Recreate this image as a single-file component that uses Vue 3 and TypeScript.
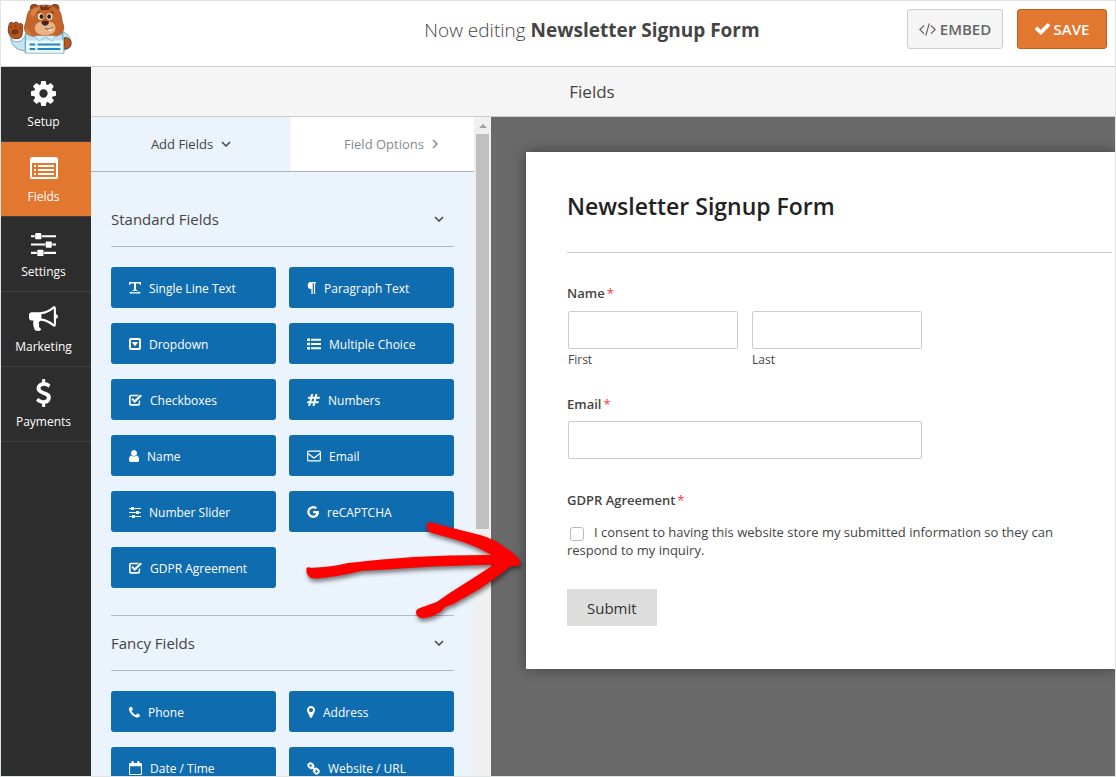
<script setup lang="ts">
import { ref } from 'vue'

interface Glyph {
  box: string
  w: number
  h: number
  d: string
}

const glyphs: Record<string, Glyph> = {
  cog: { box: '128 128 1536 1536', w: 25, h: 25, d: 'M1152 896q0-106-75-181t-181-75-181 75-75 181 75 181 181 75 181-75 75-181zm512-109v222q0 12-8 23t-20 13l-185 28q-19 54-39 91 35 50 107 138 10 12 10 25t-9 23q-27 37-99 108t-94 71q-12 0-26-9l-138-108q-44 23-91 38-16 136-29 186-7 28-36 28h-222q-14 0-24.500-8.500t-11.500-21.500l-28-184q-49-16-90-37l-141 107q-10 9-25 9-14 0-25-11-126-114-165-168-7-10-7-23 0-12 8-23 15-21 51-66.500t54-70.500q-27-50-41-99l-183-27q-13-2-21-12.500t-8-23.500v-222q0-12 8-23t19-13l186-28q14-46 39-92-40-57-107-138-10-12-10-24 0-10 9-23 26-36 98.500-107.500t94.500-71.500q13 0 26 10l138 107q44-23 91-38 16-136 29-186 7-28 36-28h222q14 0 24.500 8.500t11.500 21.500l28 184q49 16 90 37l142-107q9-9 24-9 13 0 25 10 129 119 165 170 7 8 7 22 0 12-8 23-15 21-51 66.500t-54 70.500q26 50 41 98l183 28q13 2 21 12.500t8 23.500z' },
  listAlt: { box: '0 0 28 22', w: 28, h: 22, d: 'M2.500 0h23A2.500 2.500 0 0 1 28 2.500v17a2.500 2.500 0 0 1-2.500 2.500h-23A2.500 2.500 0 0 1 0 19.500v-17A2.500 2.500 0 0 1 2.500 0zM2 6v13.500l.5.5h23l.5-.5V6zM4 8h2v2H4zM4 12h2v2H4zM4 16h2v2H4zM8 8h16v2H8zM8 12h16v2H8zM8 16h16v2H8z' },
  sliders: { box: '0 128 1536 1536', w: 25, h: 25, d: 'M352 1408v128h-352v-128h352zm352-128q26 0 45 19t19 45v256q0 26-19 45t-45 19h-256q-26 0-45-19t-19-45v-256q0-26 19-45t45-19h256zm160-384v128h-864v-128h864zm-640-512v128h-224v-128h224zm1312 1024v128h-736v-128h736zm-960-1152q26 0 45 19t19 45v256q0 26-19 45t-45 19h-256q-26 0-45-19t-19-45v-256q0-26 19-45t45-19h256zm640 512q26 0 45 19t19 45v256q0 26-19 45t-45 19h-256q-26 0-45-19t-19-45v-256q0-26 19-45t45-19h256zm320 128v128h-224v-128h224zm0-512v128h-864v-128h864z' },
  bullhorn: { box: '0 128 1792 1536', w: 29, h: 25, d: 'M1664 640q53 0 90.500 37.500t37.500 90.500-37.500 90.500-90.500 37.500v384q0 52-38 90t-90 38q-417-347-812-380-58 19-91 66t-31 100.500 40 92.500q-20 33-23 65.500t6 58 33.500 55 48 50 61.500 50.500q-29 58-111.500 83t-168.500 11.500-132-55.500q-7-23-29.500-87.500t-32-94.500-23-89-15-101 3.500-98.500 22-110.500h-122q-66 0-113-47t-47-113v-192q0-66 47-113t113-47h480q435 0 896-384 52 0 90 38t38 90v384zm-128 604v-954q-394 302-768 343v270q377 42 768 341z' },
  dollar: { box: '420 0 950 1792', w: 15, h: 28, d: 'M1362 1185q0 153-99.500 263.500t-258.500 136.500v175q0 14-9 23t-23 9h-135q-13 0-22.500-9.500t-9.500-22.500v-175q-66-9-127.500-31t-101.500-44.500-74-48-46.500-37.500-17.500-18q-17-21-2-41l103-135q7-10 23-12 15-2 24 9l2 2q113 99 243 125 37 8 74 8 81 0 142.500-43t61.500-122q0-28-15-53t-33.500-42-58.500-37.500-66-32-80-32.500q-39-16-61.500-25t-61.500-26.500-62.500-31-56.500-35.500-53.500-42.500-43.500-49-35.500-58-21-66.500-8.500-78q0-138 98-242t255-134v-180q0-13 9.500-22.500t22.500-9.500h135q14 0 23 9t9 23v176q57 6 110.500 23t87 33.500 63.500 37.500 39 29 15 14q17 18 5 38l-81 146q-8 15-23 16-14 3-27-7-3-3-14.500-12t-39-26.500-58.500-32-74.500-26-85.500-11.500q-95 0-155 43t-60 111q0 26 8.500 48t29.500 41.500 39.500 33 56 31 60.500 27 70 27.500q53 20 81 31.500t76 35 75.500 42.500 62 50 53 63.500 31.500 76.500 13 94z' },
  code: { box: '45 128 1830 1536', w: 17, h: 14, d: 'M617 1399l-50 50q-10 10-23 10t-23-10l-466-466q-10-10-10-23t10-23l466-466q10-10 23-10t23 10l50 50q10 10 10 23t-10 23l-393 393 393 393q10 10 10 23t-10 23zm591-1067l-373 1291q-4 13-15.500 19.500t-23.500 2.500l-62-17q-13-4-19.500-15.500t-2.500-24.500l373-1291q4-13 15.500-19.500t23.500-2.500l62 17q13 4 19.500 15.500t2.500 24.500zm657 651l-466 466q-10 10-23 10t-23-10l-50-50q-10-10-10-23t10-23l393-393-393-393q-10-10-10-23t10-23l50-50q10-10 23-10t23 10l466 466q10 10 10 23t-10 23z' },
  check: { box: '121 334 1550 1188', w: 15, h: 12, d: 'M1671 566q0 40-28 68l-724 724-136 136q-28 28-68 28t-68-28l-136-136-362-362q-28-28-28-68t28-68l136-136q28-28 68-28t68 28l294 295 656-657q28-28 68-28t68 28l136 136q28 28 28 68z' },
  text: { box: '0 0 12 12', w: 12, h: 12, d: 'M0 0h12v3h-1l-.5-1.500H7v6.300l1.500.4V9h-5v-.8L5 7.800V1.500H1.500L1 3H0zM2.500 9.500v.7h7v-.7L12 10.800 9.500 12v-.6h-7v.6L0 10.800z' },
  paragraph: { box: '0 0 9 12', w: 9, h: 12, d: 'M4 0h5v1.200H8.100V12H6.900V1.200H5.700V12H4.400V7A3.500 3.500 0 0 1 4 0z' },
  dropdown: { box: '0 0 12 12', w: 12, h: 12, d: 'M2 0h8a2 2 0 0 1 2 2v8a2 2 0 0 1-2 2H2a2 2 0 0 1-2-2V2a2 2 0 0 1 2-2zM2 2v8h8V2zM2.800 4h6.400L6 8.300z' },
  list: { box: '0 0 14 12', w: 14, h: 12, d: 'M0 .5h3v2.600H0zM0 4.700h3v2.600H0zM0 8.900h3v2.600H0zM4 .8h10v2H4zM4 5h10v2H4zM4 9.200h10v2H4z' },
  checkbox: { box: '0 0 13 12', w: 13, h: 12, d: 'M2 .7h8l-1.300 1.500H1.700v7.900h7.900V7.400L11.100 6v3.700a2 2 0 0 1-2 2H2a2 2 0 0 1-2-2V2.700a2 2 0 0 1 2-2zM2.300 5.200l1.400-1.300 2 2L11.400.5 13 2 5.700 9z' },
  hash: { box: '0 0 13 12', w: 13, h: 12, d: 'M4.200 0h2L5.500 2.700h2.300L8.500 0h2l-.7 2.700H13l-.5 2H9.300L8.700 7.200h3.200l-.5 2H8.200L7.500 12h-2l.7-2.800H3.900L3.200 12h-2l.7-2.800H0l.5-2h1.900L3 4.700H.8l.5-2h2.200zM5 4.700l-.6 2.500h2.300l.6-2.500z' },
  user: { box: '256 128 1280 1536', w: 10, h: 12, d: 'M1536 1399q0 109-62.500 187t-150.500 78h-854q-88 0-150.500-78t-62.500-187q0-85 8.500-160.500t31.500-152 58.500-131 94-89 134.500-34.500q131 128 313 128t313-128q76 0 134.500 34.500t94 89 58.500 131 31.500 152 8.500 160.500zm-256-887q0 159-112.500 271.500t-271.500 112.500-271.500-112.500-112.500-271.500 112.500-271.500 271.500-112.500 271.500 112.500 112.500 271.500z' },
  mail: { box: '0 0 14 12', w: 14, h: 12, d: 'M1.500.5h11A1.500 1.500 0 0 1 14 2v8a1.500 1.500 0 0 1-1.500 1.500h-11A1.500 1.500 0 0 1 0 10V2A1.500 1.500 0 0 1 1.500.5zM1.200 1.700v1.200L7 7.200l5.800-4.300V1.700zM1.200 4.400v5.900h11.600V4.400L7 8.700z' },
  google: { box: '0 0 12 12', w: 12, h: 12, d: 'M6.100 4.900h5.700c.6 4-1.700 7-5.700 7A5.900 5.900 0 1 1 10.100 1.600L8.400 3.300A3.500 3.500 0 0 0 2.500 6c0 2.100 1.700 3.600 3.600 3.600 1.600 0 2.800-.9 3.100-2.400H6.100z' },
  phone: { box: '192 256 1408 1280', w: 11, h: 11, d: 'M1600 1240q0 27-10 70.500t-21 68.500q-21 50-122 106-94 51-186 51-27 0-53-3.500t-57.500-12.500-47-14.500-55.500-20.500-49-18q-98-35-175-83-127-79-264-216t-216-264q-48-77-83-175-3-9-18-49t-20.500-55.500-14.500-47-12.500-57.500-3.500-53q0-92 51-186 56-101 106-122 25-11 68.500-21t70.500-10q14 0 21 3 18 6 53 76 11 19 30 54t35 63.500 31 53.500q3 4 17.500 25t21.500 35.500 7 28.500q0 20-28.500 50t-62 55-62 53-28.500 46q0 9 5 22.500t8.500 20.500 14 24 11.500 19q76 137 174 235t235 174q2 1 19 11.500t24 14 20.500 8.500 22.500 5q18 0 46-28.500t53-62 55-62 50-28.500q14 0 28.500 7t35.500 21.500 25 17.500q25 15 53.500 31t63.500 35 54 30q70 35 76 53 3 7 3 21z' },
  marker: { box: '384 128 1024 1536', w: 8, h: 12, d: 'M1152 640q0-106-75-181t-181-75-181 75-75 181 75 181 181 75 181-75 75-181zm256 0q0 109-33 179l-364 774q-16 33-47.500 52t-67.500 19-67.500-19-46.500-52l-365-774q-33-70-33-179 0-212 150-362t362-150 362 150 150 362z' },
  calendar: { box: '0 0 13 14', w: 13, h: 14, d: 'M1.200 2h1.300V.8a.8.800 0 0 1 .8-.8h.6a.8.800 0 0 1 .8.800V2h3.600V.8a.8.800 0 0 1 .8-.8h.6a.8.800 0 0 1 .8.800V2h1.300A1.200 1.200 0 0 1 13 3.200v9.600a1.200 1.200 0 0 1-1.200 1.200H1.200A1.200 1.200 0 0 1 0 12.800V3.200A1.200 1.200 0 0 1 1.200 2zM1.100 5.200v7.700h10.800V5.200z' },
  link: { box: '0 0 13 13', w: 13, h: 13, d: 'M1 1.600 1.900.8c1-.9 2.300-.9 3.300 0l1.500 1.500c.9.900 1 2.100.2 3.100l.7.700c1-.8 2.200-.7 3.100.2l1.500 1.500c.9 1 .9 2.300 0 3.300l-.9.900c-1 .9-2.300.9-3.300 0L6.500 10.500c-.9-.9-1-2.100-.2-3.100l-.7-.7c-1 .8-2.200.7-3.100-.2L1 5C.1 4 .1 2.600 1 1.600zM2.500 3c-.3.300-.3.600 0 .9L4 5.400c.2.200.4.200.6.100L3.800 4.700l.9-.9.800.8c.1-.2.1-.4-.1-.6L3.900 2.500c-.3-.3-.6-.3-.9 0zM7.600 8.400c-.1.200-.1.400.1.600l1.500 1.500c.3.300.6.300.9 0l.5-.5c.3-.3.300-.6 0-.9L9.100 7.600c-.2-.2-.4-.2-.6-.1l.8.800-.9.900z' }
}
glyphs.smallSliders = { ...glyphs.sliders, w: 12, h: 12 }

const sections = [
  { icon: 'cog', label: 'Setup' },
  { icon: 'listAlt', label: 'Fields' },
  { icon: 'sliders', label: 'Settings' },
  { icon: 'bullhorn', label: 'Marketing' },
  { icon: 'dollar', label: 'Payments' }
]
const current = ref('Fields')

const groups = [
  {
    title: 'Standard Fields',
    fields: [
      { icon: 'text', label: 'Single Line Text' },
      { icon: 'paragraph', label: 'Paragraph Text' },
      { icon: 'dropdown', label: 'Dropdown' },
      { icon: 'list', label: 'Multiple Choice' },
      { icon: 'checkbox', label: 'Checkboxes' },
      { icon: 'hash', label: 'Numbers' },
      { icon: 'user', label: 'Name' },
      { icon: 'mail', label: 'Email' },
      { icon: 'smallSliders', label: 'Number Slider' },
      { icon: 'google', label: 'reCAPTCHA' },
      { icon: 'checkbox', label: 'GDPR Agreement' }
    ]
  },
  {
    title: 'Fancy Fields',
    fields: [
      { icon: 'phone', label: 'Phone' },
      { icon: 'marker', label: 'Address' },
      { icon: 'calendar', label: 'Date / Time' },
      { icon: 'link', label: 'Website / URL' }
    ]
  }
]

const first = ref('')
const last = ref('')
const email = ref('')
const consent = ref(false)
</script>

<template>
  <div class="builder">
    <header class="topbar">
      <svg class="logo" viewBox="20 6 200 160" width="67" height="53" aria-label="WPForms">
        <path d="M186 96c18 6 29 22 26 38-2 12-12 16-25 17z" fill="#c3e4f1" stroke="#79aabd" stroke-width="3" />
        <path d="M192 114c13-2 21 7 20 18-1 10-9 16-22 16z" fill="#b95621" stroke="#733512" stroke-width="3" />
        <path d="M30 113c5 13 19 16 32 10l12-14 20 44H72c-23-1-41-16-42-40z" fill="#c3e4f1" stroke="#79aabd" stroke-width="3" />
        <path d="M74 102h113l4 58H74z" fill="#bfe2ef" stroke="#6798ac" stroke-width="3" />
        <circle cx="101" cy="25" r="12" fill="#a74c20" stroke="#71351a" stroke-width="3" />
        <circle cx="164" cy="25" r="12" fill="#a74c20" stroke="#71351a" stroke-width="3" />
        <path d="M92 26c20-14 61-15 80 0 14 13 10 32 17 49 6 20-8 35-35 35h-45c-29 0-42-14-36-35 7-17 4-38 19-49z" fill="#c4662c" stroke="#8a431b" stroke-width="2" />
        <path d="M92 33c9-9 19-10 27-11l-10 16-14 13c-3-6-5-12-3-18zM78 85c5 14 15 18 28 20H94c-16-3-21-11-16-20z" fill="#d98343" />
        <path d="M118 15l12 7 10-8 2 9 12-4-10 11h-23z" fill="#74351a" />
        <ellipse cx="121" cy="50" rx="9" ry="10" fill="#f5f1e8" />
        <ellipse cx="147" cy="50" rx="9" ry="10" fill="#f5f1e8" />
        <ellipse cx="123" cy="50" rx="6" ry="7" fill="#3a1e14" />
        <ellipse cx="146" cy="50" rx="6" ry="7" fill="#3a1e14" />
        <path d="M109 39l8-4M152 35l8 4" stroke="#5b2913" stroke-width="3" />
        <path d="M103 85c1-17 15-21 30-21 18 0 32 4 32 21 0 15-15 21-31 21-18 0-31-7-31-21z" fill="#e8b483" />
        <path d="M122 66c6-5 19-5 24 0-2 8-7 11-12 11s-10-3-12-11z" fill="#42221a" />
        <path d="M134 86c9 4 17 3 24-5" fill="none" stroke="#743513" stroke-width="3" />
        <path d="M141 90c6 0 9-1 14-5 0 6-5 9-9 9z" fill="#fff" />
        <path d="M25 77c0-12 11-12 14-4 1-9 14-8 15 1 7-7 15 0 12 9l-2 24c-3 11-25 13-33 4-9-9-10-23-6-34z" fill="#b65422" stroke="#72351a" stroke-width="3" />
        <path d="M37 90c8-6 18 0 17 9-6 6-15 7-21 2-2-4 0-8 4-11z" fill="#773516" />
        <circle cx="32" cy="82" r="3" fill="#773516" />
        <circle cx="45" cy="79" r="3" fill="#773516" />
        <circle cx="58" cy="84" r="3" fill="#773516" />
        <path d="M77 122h112v37H77z" fill="#e9f8fd" />
        <path d="M102 108l14 16 19-13 20 13 10-16" fill="#d3edf7" stroke="#90bfd0" stroke-width="3" />
        <path d="M87 134h17m7 0h69M87 148h17m7 0h69" stroke="#2586bb" stroke-width="6" />
      </svg>
      <h1 class="editing">Now editing <strong>Newsletter Signup Form</strong></h1>
      <div class="actions">
        <button type="button" class="action">
          <svg :viewBox="glyphs.code.box" :width="glyphs.code.w" :height="glyphs.code.h" aria-hidden="true"><path :d="glyphs.code.d" /></svg>EMBED
        </button>
        <button type="button" class="action save">
          <svg :viewBox="glyphs.check.box" :width="glyphs.check.w" :height="glyphs.check.h" aria-hidden="true"><path :d="glyphs.check.d" /></svg>SAVE
        </button>
      </div>
    </header>

    <div class="body">
      <nav class="rail">
        <button
          v-for="s in sections"
          :key="s.label"
          type="button"
          class="rail-item"
          :class="{ active: current === s.label }"
          @click="current = s.label"
        >
          <span class="rail-icon">
            <svg :viewBox="glyphs[s.icon].box" :width="glyphs[s.icon].w" :height="glyphs[s.icon].h" aria-hidden="true"><path fill-rule="evenodd" :d="glyphs[s.icon].d" /></svg>
          </span>
          {{ s.label }}
        </button>
      </nav>

      <main class="main">
        <h2 class="panel-title">Fields</h2>
        <div class="work">
          <aside class="fields">
            <div class="fields-content">
              <div class="tabs">
                <button type="button" class="tab on">
                  Add Fields
                  <svg viewBox="0 0 10 6" width="10" height="6" aria-hidden="true"><path class="line" d="M1 1l4 4 4-4" /></svg>
                </button>
                <button type="button" class="tab">
                  Field Options
                  <svg viewBox="0 0 6 10" width="6" height="10" aria-hidden="true"><path class="line" d="M1 1l4 4-4 4" /></svg>
                </button>
              </div>
              <section v-for="g in groups" :key="g.title" class="group">
                <h3 class="group-title">
                  {{ g.title }}
                  <svg viewBox="0 0 10 6" width="10" height="6" aria-hidden="true"><path class="line" d="M1 1l4 4 4-4" /></svg>
                </h3>
                <div class="grid">
                  <button v-for="f in g.fields" :key="f.label" type="button" class="field">
                    <svg :viewBox="glyphs[f.icon].box" :width="glyphs[f.icon].w" :height="glyphs[f.icon].h" aria-hidden="true"><path fill-rule="evenodd" :d="glyphs[f.icon].d" /></svg>
                    {{ f.label }}
                  </button>
                </div>
              </section>
            </div>
            <div class="scroll" aria-hidden="true">
              <div class="scroll-up"></div>
              <div class="thumb"></div>
            </div>
          </aside>

          <div class="preview">
            <form class="card" @submit.prevent>
              <h2 class="form-title">Newsletter Signup Form</h2>
              <div class="caption">Name<span class="req">*</span></div>
              <div class="names">
                <div>
                  <input id="first" v-model="first" type="text" class="box" />
                  <label class="sub" for="first">First</label>
                </div>
                <div>
                  <input id="last" v-model="last" type="text" class="box" />
                  <label class="sub" for="last">Last</label>
                </div>
              </div>
              <label class="caption email-caption" for="email">Email<span class="req">*</span></label>
              <div class="single"><input id="email" v-model="email" type="email" class="box" /></div>
              <div class="caption gdpr-caption">GDPR Agreement<span class="req">*</span></div>
              <div class="consent">
                <input id="consent" v-model="consent" type="checkbox" class="tick" /><label for="consent">I consent to having this website store my submitted information so they can respond to my inquiry.</label>
              </div>
              <button type="submit" class="submit">Submit</button>
            </form>
          </div>
        </div>
      </main>
    </div>

    <svg class="arrow" viewBox="60 102 690 360" width="230" height="120" aria-hidden="true">
      <path d="M79 278Q82 272 92 275Q140 276 200 262Q310 249 400 243Q520 236 650 237L670 266Q520 267 400 275Q320 280 242 285Q190 298 150 303Q110 310 92 306Q78 296 79 278Z" />
      <path d="M440 150Q440 138 453 139L520 157L600 177Q640 188 672 212Q712 238 719 252Q722 266 712 270L690 268L640 240Q590 210 530 192L448 169Q438 162 440 150Z" />
      <path d="M712 270L692 270Q660 298 600 338L520 384Q494 390 486 404Q464 422 428 427Q410 424 408 410Q407 400 420 396L470 378L510 350L600 293L650 260L680 238Z" />
    </svg>
  </div>
</template>

<style>
html,
body,
#app {
  height: 100%;
}
</style>

<style scoped>
.builder,
.builder * {
  box-sizing: border-box;
}
.builder {
  position: relative;
  display: flex;
  flex-direction: column;
  height: 100vh;
  overflow: hidden;
  border: 1px solid #e2e4e4;
  background: #fff;
  color: #444;
  font-family: "Open Sans", "Noto Sans", sans-serif;
  font-size: 13px;
}
button {
  margin: 0;
  padding: 0;
  border: 0;
  font: inherit;
  color: inherit;
  cursor: pointer;
}
svg {
  display: block;
  flex: none;
  fill: currentColor;
}
.line {
  fill: none;
  stroke: currentColor;
  stroke-width: 1.500;
}
h1,
h2,
h3 {
  margin: 0;
  font-weight: 400;
}
.topbar {
  display: grid;
  grid-template-columns: auto 1fr;
  align-items: center;
  flex: none;
  height: 66px;
  border-bottom: 1px solid #ccc;
}
.logo {
  grid-area: 1 / 1;
  align-self: start;
  margin: 1px 0 0 6px;
}
.editing {
  grid-area: 1 / 1 / 2 / 3;
  justify-self: center;
  padding: 0 0 7px 68px;
  font-size: 19px;
  font-weight: 300;
  line-height: 28px;
}
.editing strong {
  font-weight: 700;
}
.actions {
  grid-area: 1 / 2;
  justify-self: end;
  display: flex;
  gap: 14px;
  padding: 0 8px 10px 0;
}
.action {
  display: flex;
  align-items: center;
  justify-content: center;
  gap: 4px;
  width: 96px;
  height: 40px;
  border: 1px solid #ccc;
  border-radius: 3px;
  background: #f5f5f5;
  color: #666;
  font-size: 15px;
  font-weight: 600;
}
.save {
  width: 90px;
  border-color: #c35f1e;
  background: #e27730;
  color: #fff;
}
.body {
  display: flex;
  flex: 1;
  min-height: 0;
}
.rail {
  flex: none;
  width: 90px;
  background: #2d2d2d;
}
.rail-item {
  display: flex;
  flex-direction: column;
  align-items: center;
  width: 100%;
  height: 75px;
  padding: 12px 5px 0 0;
  border-bottom: 1px solid #404040;
  background: transparent;
  color: #fff;
  font-size: 12px;
  line-height: 18px;
}
.rail-item.active {
  background: #e27730;
}
.rail-icon {
  display: flex;
  align-items: center;
  height: 28px;
  margin-bottom: 6px;
}
.main {
  display: flex;
  flex-direction: column;
  flex: 1;
  min-width: 0;
}
.panel-title {
  flex: none;
  height: 50px;
  padding-right: 22px;
  border-bottom: 1px solid #ccc;
  background: #f5f5f5;
  font-size: 17px;
  line-height: 49px;
  text-align: center;
}
.work {
  display: flex;
  flex: 1;
  min-height: 0;
}
.fields {
  display: flex;
  flex: none;
  width: 400px;
  overflow: hidden;
  background: #ebf3fc;
}
.fields-content {
  flex: 1;
}
.tabs {
  display: flex;
  height: 55px;
  margin-bottom: 20px;
  border-bottom: 1px solid #a9b5c0;
}
.tab {
  display: flex;
  align-items: center;
  justify-content: center;
  gap: 8px;
  flex: 1;
  padding-left: 17px;
  background: #fff;
  color: #86898d;
}
.tab.on {
  flex: none;
  width: 200px;
  padding: 0;
  background: #ebf3fc;
  color: #444;
}
.group {
  margin: 0 20px 27px;
}
.group + .group {
  border-top: 1px solid #b0bac5;
}
.group-title {
  display: flex;
  align-items: center;
  justify-content: space-between;
  height: 55px;
  padding-right: 10px;
  border-bottom: 1px solid #b0bac5;
  font-size: 15px;
}
.grid {
  display: grid;
  grid-template-columns: 1fr 1fr;
  gap: 15px 13px;
  margin-top: 20px;
}
.field {
  display: flex;
  align-items: center;
  gap: 8px;
  height: 41px;
  padding: 1px 0 0 18px;
  border-radius: 3px;
  background: #0f6cae;
  color: #fff;
  font-size: 12px;
  text-align: left;
  white-space: nowrap;
}
.scroll {
  flex: none;
  width: 17px;
  background: #f0f0f0;
}
.scroll-up {
  display: flex;
  align-items: center;
  justify-content: center;
  height: 17px;
}
.scroll-up::before {
  content: "";
  border: 4px solid transparent;
  border-top: 0;
  border-bottom-color: #a0a0a0;
}
.thumb {
  height: 60%;
  margin: 0 2px;
  background: #c0c0c0;
}
.preview {
  flex: 1;
  min-width: 0;
  padding: 35px 0 0 35px;
  overflow: hidden;
  background: #6a6a6a;
}
.card {
  padding: 40px 3px 43px 41px;
  background: #fff;
  box-shadow: 0 0 14px rgba(0, 0, 0, 0.4);
}
.form-title {
  padding-bottom: 32px;
  border-bottom: 1px solid #ccc;
  margin-bottom: 31px;
  color: #222;
  font-size: 23px;
  font-weight: 600;
  line-height: 28px;
}
.caption {
  display: block;
  margin-bottom: 9px;
  font-weight: 600;
  line-height: 18px;
}
.req {
  margin-left: 2px;
  color: #f33;
  font-weight: 400;
}
.names {
  display: grid;
  grid-template-columns: 1fr 1fr;
  gap: 13px;
}
.names,
.single {
  max-width: 355px;
}
.names > div,
.single {
  padding-left: 1px;
}
.box {
  display: block;
  width: 100%;
  height: 38px;
  padding: 0 10px;
  border: 1px solid #ccc;
  border-radius: 2px;
  background: #fff;
  font: inherit;
}
.sub {
  display: block;
  margin-top: 2px;
  font-size: 12px;
  line-height: 18px;
}
.email-caption {
  margin: 26px 0 8px;
}
.gdpr-caption {
  margin: 32px 0 14px;
}
.consent {
  padding-right: 20px;
  line-height: 18px;
}
.tick {
  appearance: none;
  width: 14px;
  height: 14px;
  margin: 0 10px 0 3px;
  border: 1px solid #bbb;
  border-radius: 3px;
  background: #fff;
  vertical-align: -4px;
}
.tick:checked {
  background: #0f6cae;
}
.submit {
  height: 37px;
  margin-top: 30px;
  padding: 0 20px;
  background: #ddd;
  color: #333;
  font-size: 15px;
}
.arrow {
  position: absolute;
  top: 509px;
  left: 299px;
  fill: #fe0000;
  filter: drop-shadow(1px 3px 2px rgba(0, 0, 0, 0.5));
  pointer-events: none;
}
</style>
